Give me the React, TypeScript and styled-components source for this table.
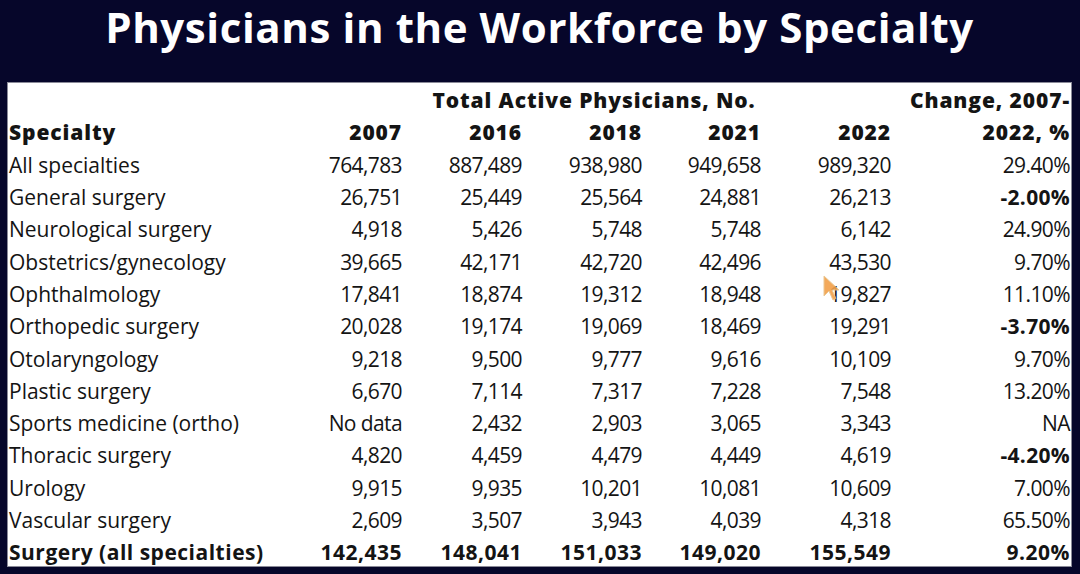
import React from "react";
import styled, { createGlobalStyle } from "styled-components";

const Global = createGlobalStyle`
  html, body { margin: 0; padding: 0; }
  body { background: #06062a; width: 1080px; height: 574px; overflow: hidden; }
`;

const Page = styled.div`
  position: relative;
  width: 1080px;
  height: 574px;
  display: flex;
  flex-direction: column;
  padding: 0 8px 0 7px;
  box-sizing: border-box;
  font-family: "Open Sans", "Liberation Sans", sans-serif;
`;

const Title = styled.h1`
  margin: 0;
  height: 82px;
  display: flex;
  align-items: flex-start;
  justify-content: center;
  padding-top: 0;
  box-sizing: border-box;
  color: #ffffff;
  font-size: 42px;
  font-weight: 700;
  letter-spacing: 0.6px;
  line-height: 54px;
`;

const Box = styled.div`
  background: #ffffff;
  border: 1px solid #8a8a98;
  height: 485px;
  box-sizing: border-box;
  padding-top: 1px;
`;

const Table = styled.table`
  width: 100%;
  border-collapse: collapse;
  table-layout: fixed;
  color: #141414;
  font-size: 21px;
`;

type Kind = "name" | "num" | "head" | "total" | "totalName";

const Cell = styled.td<{ $kind: Kind; $bold?: boolean; $center?: boolean }>`
  height: 32.3px;
  padding: ${(p) => (p.$kind === "name" || p.$kind === "totalName" ? "0 0 0 1px" : "0 1px 0 0")};
  text-align: ${(p) =>
    p.$kind === "name" || p.$kind === "totalName" ? "left" : p.$center ? "center" : "right"};
  font-weight: ${(p) =>
    p.$kind === "head" ? 800 : p.$bold || p.$kind === "total" || p.$kind === "totalName" ? 700 : 400};
  letter-spacing: ${(p) =>
    p.$kind === "head"
      ? "0.9px"
      : p.$kind === "total" || p.$kind === "totalName"
      ? "0.5px"
      : p.$bold
      ? "0.3px"
      : p.$kind === "num"
      ? "-0.6px"
      : "0"};
  white-space: nowrap;
  line-height: 32px;
`;

const Cursor = styled.svg`
  position: absolute;
  left: 822px;
  top: 274px;
`;

type Row = { name: string; vals: string[]; change: string; boldChange?: boolean; bold?: boolean };

const rows: Row[] = [
  { name: "All specialties", vals: ["764,783", "887,489", "938,980", "949,658", "989,320"], change: "29.40%" },
  { name: "General surgery", vals: ["26,751", "25,449", "25,564", "24,881", "26,213"], change: "-2.00%", boldChange: true },
  { name: "Neurological surgery", vals: ["4,918", "5,426", "5,748", "5,748", "6,142"], change: "24.90%" },
  { name: "Obstetrics/gynecology", vals: ["39,665", "42,171", "42,720", "42,496", "43,530"], change: "9.70%" },
  { name: "Ophthalmology", vals: ["17,841", "18,874", "19,312", "18,948", "19,827"], change: "11.10%" },
  { name: "Orthopedic surgery", vals: ["20,028", "19,174", "19,069", "18,469", "19,291"], change: "-3.70%", boldChange: true },
  { name: "Otolaryngology", vals: ["9,218", "9,500", "9,777", "9,616", "10,109"], change: "9.70%" },
  { name: "Plastic surgery", vals: ["6,670", "7,114", "7,317", "7,228", "7,548"], change: "13.20%" },
  { name: "Sports medicine (ortho)", vals: ["No data", "2,432", "2,903", "3,065", "3,343"], change: "NA" },
  { name: "Thoracic surgery", vals: ["4,820", "4,459", "4,479", "4,449", "4,619"], change: "-4.20%", boldChange: true },
  { name: "Urology", vals: ["9,915", "9,935", "10,201", "10,081", "10,609"], change: "7.00%" },
  { name: "Vascular surgery", vals: ["2,609", "3,507", "3,943", "4,039", "4,318"], change: "65.50%" },
  { name: "Surgery (all specialties)", vals: ["142,435", "148,041", "151,033", "149,020", "155,549"], change: "9.20%", bold: true },
];

const widths = [275, 120, 120, 120, 119, 130, 179];

export default function App() {
  return (
    <Page>
      <Global />
      <Title>Physicians in the Workforce by Specialty</Title>
      <Box>
        <Table>
          <colgroup>
            {widths.map((w, i) => (
              <col key={i} style={{ width: w }} />
            ))}
          </colgroup>
          <tbody>
            <tr>
              <Cell $kind="name" />
              <Cell $kind="head" colSpan={5} $center style={{ paddingLeft: 14 }}>
                Total Active Physicians, No.
              </Cell>
              <Cell $kind="head">Change, 2007-</Cell>
            </tr>
            <tr>
              <Cell $kind="head" style={{ textAlign: "left", paddingLeft: 1 }}>Specialty</Cell>
              {["2007", "2016", "2018", "2021", "2022"].map((y) => (
                <Cell key={y} $kind="head">{y}</Cell>
              ))}
              <Cell $kind="head">2022, %</Cell>
            </tr>
            {rows.map((r) => (
              <tr key={r.name}>
                <Cell $kind={r.bold ? "totalName" : "name"}>{r.name}</Cell>
                {r.vals.map((v, i) => (
                  <Cell key={i} $kind={r.bold ? "total" : "num"}>{v}</Cell>
                ))}
                <Cell $kind={r.bold ? "total" : "num"} $bold={r.boldChange}>{r.change}</Cell>
              </tr>
            ))}
          </tbody>
        </Table>
      </Box>
      <Cursor width="20" height="28" viewBox="0 0 20 28">
        <path d="M2 2 L2 22 L7 17 L11 26 L14 24.5 L10 16 L17 16 Z" fill="#f2a04a" stroke="#e8c38a" strokeWidth="1" opacity="0.9" />
      </Cursor>
    </Page>
  );
}
